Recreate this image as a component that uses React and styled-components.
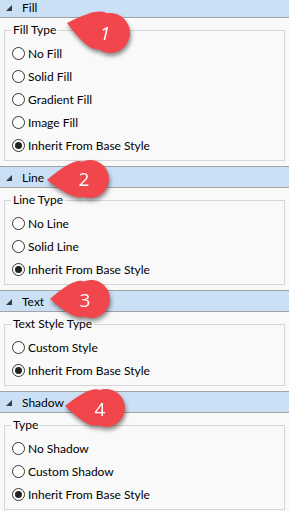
import React from 'react'
import styled, { createGlobalStyle } from 'styled-components'

const GlobalStyle = createGlobalStyle`
    html, body {
        margin: 0;
        padding: 0;
        background: #f9f9f9;
    }
    body {
        font-family: Lato, "Liberation Sans", sans-serif;
        font-size: 12px;
        color: #000;
    }
`

const Page = styled.div`
    position: relative;
    width: 289px;
    height: 511px;
    overflow: hidden;
    background: #f9f9f9;
`

const Panel = styled.div`
    margin-top: -4px;
    display: flex;
    flex-direction: column;
`

const Section = styled.section`
    display: flex;
    flex-direction: column;
    margin-bottom: 5px;
`

const Header = styled.div`
    height: 20px;
    display: flex;
    align-items: center;
    gap: 10px;
    padding-left: 6px;
    background: #cbe0f4;
    border-top: 1px solid #a3a3a3;
    border-bottom: 1px solid #a3a3a3;
`

const Arrow = styled.span`
    width: 0;
    height: 0;
    border-style: solid;
    border-width: 0 0 6px 6px;
    border-color: transparent transparent #3a3a3a transparent;
    margin-top: 1px;
`

const Group = styled.fieldset`
    margin: 4px 4px 0 4px;
    padding: 4px 0 3px 7px;
    border: 1px solid #d6d6d6;
    display: flex;
    flex-direction: column;
    min-width: 0;
`

const Legend = styled.legend`
    padding: 0 2px;
    margin-left: -1px;
    line-height: 16px;
`

const Option = styled.label`
    height: 23px;
    display: flex;
    align-items: center;
    gap: 3px;
    white-space: nowrap;
`

const Radio = styled.span`
    box-sizing: border-box;
    width: 13px;
    height: 13px;
    border-radius: 50%;
    border: 1px solid #333;
    background: #fff;
    display: flex;
    align-items: center;
    justify-content: center;

    &::after {
        content: '';
        width: 7px;
        height: 7px;
        border-radius: 50%;
        background: ${(p) => (p.checked ? '#222' : 'transparent')};
    }
`

const CalloutBox = styled.svg`
    position: absolute;
    overflow: visible;
    filter: drop-shadow(1px 3px 2px rgba(0, 0, 0, 0.45));
`

const Number = styled.text`
    fill: #fff;
    font-family: "Open Sans", "Liberation Sans", sans-serif;
    font-size: 19px;
    font-style: ${(p) => (p.italic ? 'italic' : 'normal')};
`

const sections = [
    { title: 'Fill', legend: 'Fill Type', options: ['No Fill', 'Solid Fill', 'Gradient Fill', 'Image Fill', 'Inherit From Base Style'] },
    { title: 'Line', legend: 'Line Type', options: ['No Line', 'Solid Line', 'Inherit From Base Style'] },
    { title: 'Text', legend: 'Text Style Type', options: ['Custom Style', 'Inherit From Base Style'] },
    { title: 'Shadow', legend: 'Type', options: ['No Shadow', 'Custom Shadow', 'Inherit From Base Style'] },
]

const callouts = [
    { num: '1', cx: 110, cy: 33, r: 20, tx: 67, ty: 23, nx: 105, ny: 40, italic: true },
    { num: '2', cx: 90, cy: 179, r: 19, tx: 47, ty: 180, nx: 84, ny: 186 },
    { num: '3', cx: 91, cy: 299, r: 19, tx: 50, ty: 299, nx: 85, ny: 307 },
    { num: '4', cx: 106, cy: 408, r: 19, tx: 65, ty: 406, nx: 100, ny: 416 },
]

const Callout = ({ num, cx, cy, r, tx, ty, nx, ny, italic }) => {
    const dx = tx - cx
    const dy = ty - cy
    const L = Math.sqrt(dx * dx + dy * dy)
    const rot = (Math.atan2(dy, dx) * 180) / Math.PI - 180
    const phi = (112 * Math.PI) / 180
    const px = r * Math.cos(phi)
    const py = r * Math.sin(phi)
    const t = 0.55 * r
    const qx = px - t * Math.sin(phi)
    const qy = py - t * Math.cos(phi)
    const d = `M ${-L} 0 Q ${qx} ${-qy} ${px} ${-py} A ${r} ${r} 0 1 1 ${px} ${py} Q ${qx} ${qy} ${-L} 0 Z`
    const size = 120
    return (
        <CalloutBox
            width={size}
            height={size}
            viewBox={`${-size / 2} ${-size / 2} ${size} ${size}`}
            style={{ left: cx - size / 2, top: cy - size / 2 }}
        >
            <path d={d} fill="#f0464c" transform={`rotate(${rot})`} />
            <Number x={nx - cx} y={ny - cy} textAnchor="middle" italic={italic}>
                {num}
            </Number>
        </CalloutBox>
    )
}

const App = () => (
    <Page>
        <GlobalStyle />
        <Panel>
            {sections.map((s) => (
                <Section key={s.title}>
                    <Header>
                        <Arrow />
                        {s.title}
                    </Header>
                    <Group>
                        <Legend>{s.legend}</Legend>
                        {s.options.map((o, i) => (
                            <Option key={o}>
                                <Radio checked={i === s.options.length - 1} />
                                {o}
                            </Option>
                        ))}
                    </Group>
                </Section>
            ))}
        </Panel>
        {callouts.map((c) => (
            <Callout key={c.num} {...c} />
        ))}
    </Page>
)

export default App
